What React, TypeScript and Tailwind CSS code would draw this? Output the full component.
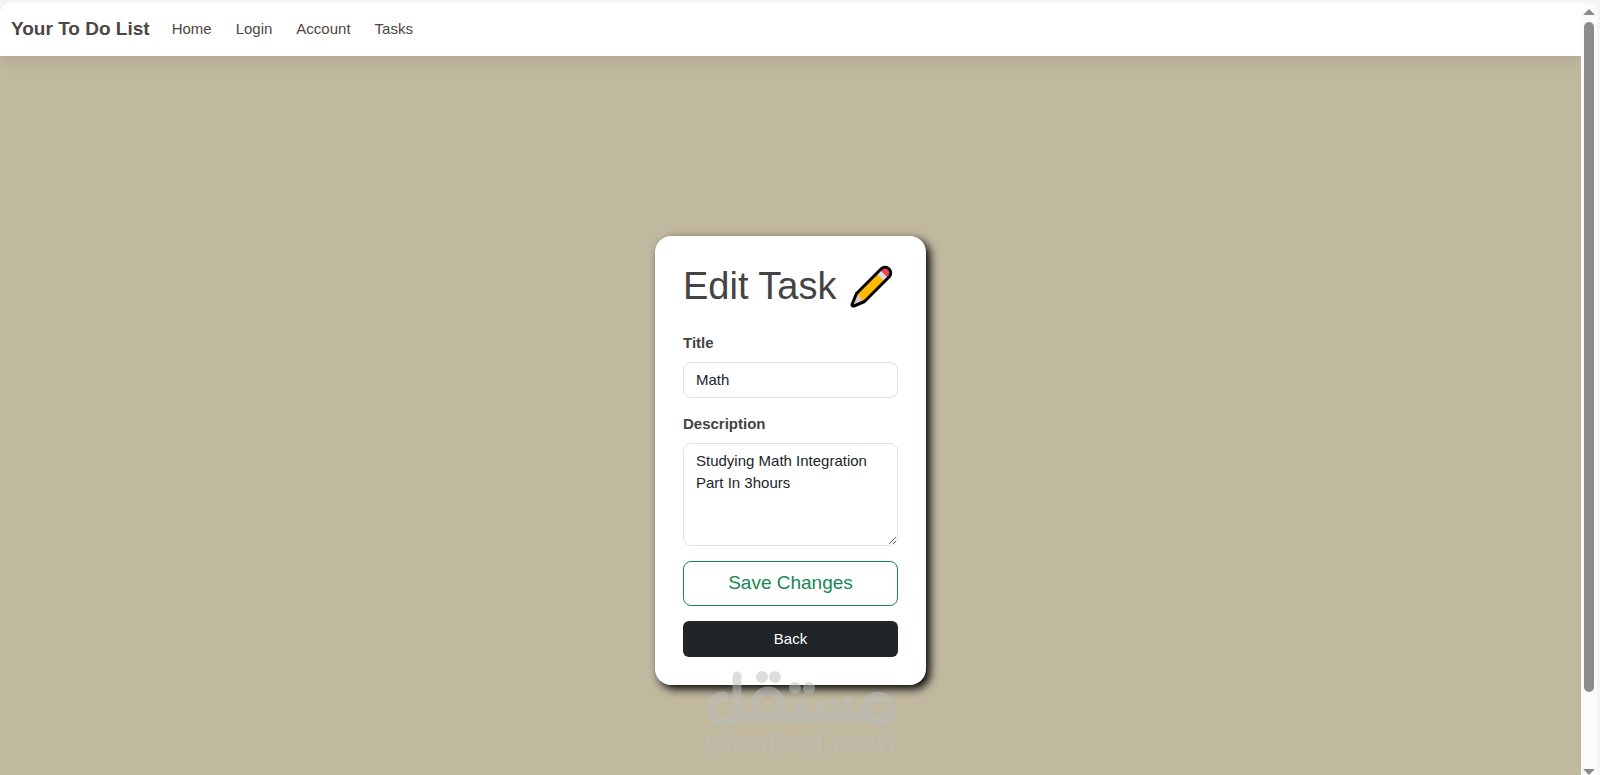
import { useState } from "react";

const links = ["Home", "Login", "Account", "Tasks"]

function Pencil() {
    return (
        <svg viewBox="0 0 43 43" className="size-[43px] shrink-0" aria-hidden="true">
            <path d="M31.500 3.500 L6.500 28.500 L2 39.500 Q2 41.500 4 41 L14.500 36.500 L39.500 11.500 A5.700 5.700 0 0 0 31.500 3.500 Z" fill="#ffb900" />
            <path d="M31.500 3.500 L27 8 L35 16 L39.500 11.500 A5.700 5.700 0 0 0 31.500 3.500 Z" fill="#e74856" />
            <path d="M30 5 L26.500 8.500 L34.500 16.500 L38 13 Z" fill="#dcdcdc" />
            <path d="M6.500 28.500 L2 40 L4 41 L14.500 36.500 Z" fill="#e2cdc2" />
            <path d="M31.500 3.500 L6.500 28.500 L2 39.500 Q2 41.500 4 41 L14.500 36.500 L39.500 11.500 A5.700 5.700 0 0 0 31.500 3.500 Z" fill="none" stroke="#000" strokeWidth="3" strokeLinejoin="round" />
        </svg>
    )
}

function Watermark() {
    return (
        <div className="pointer-events-none absolute top-[667px] left-[702px] flex w-[196px] flex-col items-center text-[#bbbfbd] opacity-50">
            <svg viewBox="0 0 196 60" className="h-[60px] w-[196px]" fill="none" stroke="currentColor" strokeWidth="9" strokeLinecap="round" role="img" aria-label="مستقل">
                <path d="M22 29 A13 13 0 1 0 21 55 Q31 55 35 50 H168" />
                <line x1="35" y1="9" x2="35" y2="50" />
                <circle cx="66" cy="37" r="13" />
                <circle cx="176" cy="42" r="13" />
                <line x1="98" y1="37" x2="98" y2="50" />
                <line x1="117" y1="38" x2="117" y2="50" />
                <line x1="132" y1="35" x2="132" y2="50" />
                <line x1="146" y1="33" x2="146" y2="50" />
                <g fill="currentColor" stroke="none">
                    <circle cx="60" cy="10" r="6" />
                    <circle cx="73" cy="10" r="6" />
                    <circle cx="93" cy="21" r="6" />
                    <circle cx="107" cy="21" r="6" />
                </g>
            </svg>
            <span className="text-[31px] leading-8 font-bold">mostaql.com</span>
        </div>
    )
}

function ScrollBar() {
    return (
        <div className="flex w-4 shrink-0 flex-col items-center rounded-tr-lg bg-[#fcfcfc] pt-[6px]">
            <svg viewBox="0 0 12 6" className="h-[6px] w-3" fill="#8b8b8b"><path d="M6 0 L12 6 H0 Z" /></svg>
            <div className="mt-[7px] h-[670px] w-[10px] rounded-full bg-[#8b8b8b]" />
            <svg viewBox="0 0 12 6" className="mt-auto h-[6px] w-3" fill="#8b8b8b"><path d="M0 0 H12 L6 6 Z" /></svg>
        </div>
    )
}

export default function App() {

    const [title, setTitle] = useState("Math")
    const [description, setDescription] = useState("Studying Math Integration Part In 3hours")

    return (
        <div className="relative flex h-screen overflow-hidden bg-[#f5f5f5] pt-[3px] pr-[3px] font-['Liberation_Sans',Arial,sans-serif] text-[15px]">
            <div className="flex min-w-0 flex-1 flex-col overflow-hidden rounded-tl-lg bg-[#c1b8a0]">
                <nav className="flex h-[53px] shrink-0 items-center bg-white pb-px pl-[11px] text-[#4e4643] shadow-[0_4px_15px_rgba(0,0,0,0.1)]">
                    <a href="#" className="mr-[22px] text-[19px] font-bold">Your To Do List</a>
                    <div className="flex gap-6">
                        {links.map((link) => (
                            <a key={link} href="#">{link}</a>
                        ))}
                    </div>
                </nav>
                <main className="flex justify-center pt-[180px]">
                    <form onSubmit={(e) => e.preventDefault()} className="flex w-[271px] flex-col rounded-2xl bg-white p-7 text-[#444] shadow-[4px_4px_10px_#000]">
                        <h1 className="mb-6 flex h-11 items-center gap-[14px] text-[38px] whitespace-nowrap">
                            Edit Task
                            <Pencil />
                        </h1>
                        <label htmlFor="title" className="mb-2 leading-[22px] font-bold">Title</label>
                        <input
                            id="title"
                            value={title}
                            onChange={(e) => setTitle(e.target.value)}
                            className="mb-[15px] h-9 rounded-lg border border-[#dee2e6] px-3 pb-[2px] text-[#212529]"
                        />
                        <label htmlFor="description" className="mb-2 leading-[22px] font-bold">Description</label>
                        <textarea
                            id="description"
                            value={description}
                            onChange={(e) => setDescription(e.target.value)}
                            className="mb-[15px] h-[103px] resize-y rounded-lg border border-[#dee2e6] px-3 py-[6px] leading-[22px] text-[#212529]"
                        />
                        <button type="submit" className="mb-[15px] h-[45px] rounded-lg border border-[#198754] text-[19px] text-[#198754]">Save Changes</button>
                        <button type="button" className="h-9 rounded-md bg-[#212529] text-white">Back</button>
                    </form>
                </main>
            </div>
            <ScrollBar />
            <Watermark />
        </div>
    )
}
